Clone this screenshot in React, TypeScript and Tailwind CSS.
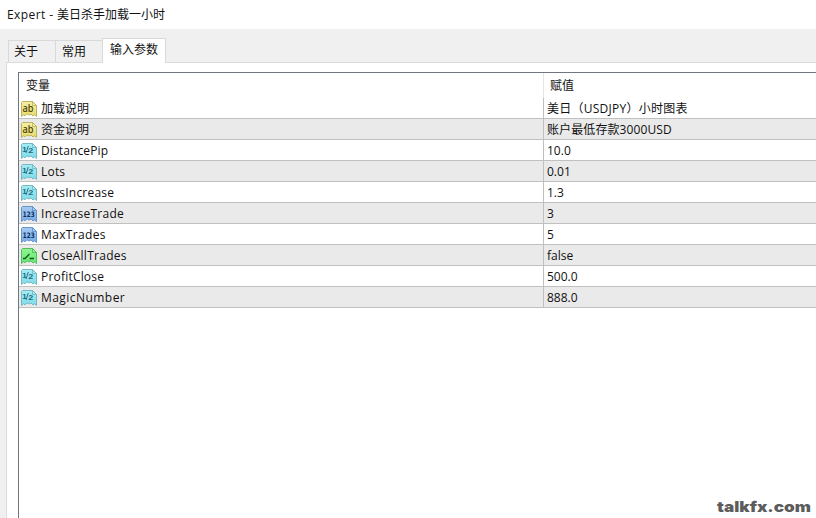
import { memo } from 'react';

type ParamKind = 'string' | 'double' | 'int' | 'bool';

interface Param {
  kind: ParamKind;
  name: string;
  value: string;
  nameClass?: string;
  valueClass?: string;
}

const PARAMS: Param[] = [
  { kind: 'string', name: '加载说明', value: '美日（USDJPY）小时图表', valueClass: 'tracking-[0.25px]' },
  { kind: 'string', name: '资金说明', value: '账户最低存款3000USD', valueClass: 'tracking-[0.1px]' },
  { kind: 'double', name: 'DistancePip', value: '10.0', nameClass: 'tracking-[0.12px]' },
  { kind: 'double', name: 'Lots', value: '0.01', nameClass: 'tracking-[0.2px]' },
  { kind: 'double', name: 'LotsIncrease', value: '1.3', nameClass: 'tracking-[0.2px]' },
  { kind: 'int', name: 'IncreaseTrade', value: '3', nameClass: 'tracking-[0.28px]' },
  { kind: 'int', name: 'MaxTrades', value: '5', nameClass: 'tracking-[0.35px]' },
  { kind: 'bool', name: 'CloseAllTrades', value: 'false', nameClass: 'tracking-[0.28px]' },
  { kind: 'double', name: 'ProfitClose', value: '500.0', nameClass: 'tracking-[0.2px]' },
  { kind: 'double', name: 'MagicNumber', value: '888.0', nameClass: 'tracking-[0.45px]' },
];

const COLORS: Record<ParamKind, { top: string; bottom: string; edge: string; ink: string }> = {
  string: { top: '#f5efa4', bottom: '#e8dc68', edge: '#b9ab55', ink: '#4a4210' },
  double: { top: '#a6ecf2', bottom: '#7fdbe8', edge: '#6cb2c0', ink: '#1c6a86' },
  int: { top: '#a6cbf2', bottom: '#76abe4', edge: '#5c8cc6', ink: '#0b2c5c' },
  bool: { top: '#90f590', bottom: '#66e672', edge: '#4cb45a', ink: '#0c5a1c' },
};

const ParamIcon = memo(({ kind }: { kind: ParamKind }) => {
  const c = COLORS[kind];

  return (
    <svg width="16" height="16" viewBox="0 0 16 16" className="shrink-0">
      <defs>
        <linearGradient id={`fill-${kind}`} x1="0" y1="0" x2="0" y2="1">
          <stop offset="0" stopColor={c.top} />
          <stop offset="1" stopColor={c.bottom} />
        </linearGradient>
      </defs>
      {/* Torn sheet with a folded corner */}
      <path
        d="M1.5.5H11.5L15.5 4.5V15.5L13.5 13.8L12 15L10 13L8 14L6 12.8L4 14.8L2.5 13.8L.5 15.5V1.5Z"
        fill={`url(#fill-${kind})`}
        stroke={c.edge}
        strokeWidth="0.9"
      />
      <path d="M11.5.5V4.5H15.5Z" fill={c.top} stroke={c.edge} strokeWidth="0.8" />
      {kind === 'string' && (
        <text x="1.6" y="11.2" fontSize="10" fontFamily="Noto Sans, sans-serif" fontWeight="500" textLength="11" lengthAdjust="spacingAndGlyphs" fill={c.ink}>ab</text>
      )}
      {kind === 'double' && (
        <g fill={c.ink} fontFamily="Liberation Sans, sans-serif" fontSize="8" fontWeight="700">
          <text x="1.2" y="9">1</text>
          <path d="M7.3 3L5 10" fill="none" stroke={c.ink} strokeWidth="0.9" />
          <text x="7.2" y="10" textLength="5" lengthAdjust="spacingAndGlyphs">2</text>
        </g>
      )}
      {kind === 'int' && (
        <text x="1.8" y="11" fontSize="7.5" fontFamily="DejaVu Sans, sans-serif" fontWeight="700" textLength="11.8" lengthAdjust="spacingAndGlyphs" fill={c.ink}>123</text>
      )}
      {kind === 'bool' && (
        <path d="M2 10.5H4L8.5 6M8.5 10.5H13" fill="none" stroke={c.ink} strokeWidth="1.3" />
      )}
    </svg>
  );
});

const ParamRow = ({ param, shaded }: { param: Param; shaded: boolean }) => (
  <div className={`flex h-[21px] border-b border-[#c0c0c0] ${shaded ? 'bg-[#eaeaea]' : 'bg-white'}`}>
    <div className="flex w-[525px] items-center border-r border-[#c0c0c0] pl-[2px] pt-[2px]">
      <ParamIcon kind={param.kind} />
      <span className={`ml-1 ${param.nameClass ?? ''}`}>{param.name}</span>
    </div>
    <div className={`flex flex-1 items-center pl-[3px] pt-[2px] ${param.valueClass ?? ''}`}>{param.value}</div>
  </div>
);

export default function App() {
  return (
    <div className="relative flex h-[518px] w-[816px] flex-col overflow-hidden whitespace-nowrap bg-[#f0f0f0] font-['Open_Sans','Noto_Sans_CJK_SC',sans-serif] text-[12px] leading-[20px] text-[#111]">
      <div className="h-[29px] shrink-0 bg-white pl-[7px] pt-[5px]">
        <span className="tracking-[0.4px]">Expert - </span>美日杀手加载一小时
      </div>

      {/* Tabs */}
      <div className="z-10 -mb-px flex h-[34px] shrink-0 items-end pl-2">
        <div className="mb-px h-[22px] w-[47px] border-l border-t border-[#d9d9d9] pl-[5px] pt-px">关于</div>
        <div className="mb-px h-[22px] w-[47px] border-l border-t border-[#d9d9d9] pl-[6px] pt-px">常用</div>
        <div className="h-[25px] w-[64px] border-x border-t border-[#d9d9d9] bg-white pl-[7px] pt-px">输入参数</div>
      </div>

      {/* Tab page */}
      <div className="ml-[6px] flex-1 border-l border-t border-[#dcdcdc] bg-white pl-[11px] pt-[9px]">
        <div className="h-full border-l border-t border-[#6f7680]">
          <div className="flex h-[25px]">
            <div className="w-[525px] border-r border-[#e5e5e5] pl-[7px] pt-[3px]">变量</div>
            <div className="pl-[6px] pt-[3px]">赋值</div>
          </div>
          {PARAMS.map((param, i) => (
            <ParamRow key={param.name} param={param} shaded={i % 2 === 1} />
          ))}
        </div>
      </div>

      {/* Watermark */}
      <svg className="absolute bottom-0 right-0" width="104" height="24" viewBox="0 0 104 24">
        <text x="5" y="18" fontSize="14.5" fontFamily="Inter, Liberation Sans, sans-serif" fontWeight="900" textLength="94" lengthAdjust="spacingAndGlyphs" fill="#5c5c5c">talkfx.com</text>
      </svg>
    </div>
  );
}
